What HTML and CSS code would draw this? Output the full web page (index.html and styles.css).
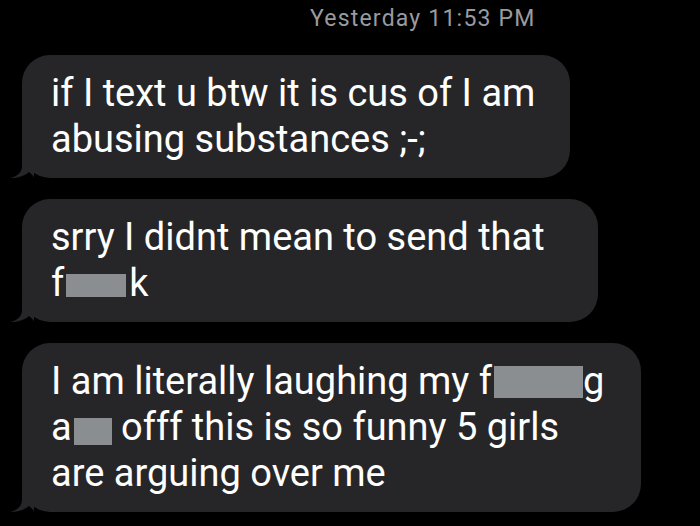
FILE: index.html
```html
<!DOCTYPE html>
<html lang="en">
<head>
  <meta charset="UTF-8" />
  <meta name="viewport" content="width=device-width, initial-scale=1.0"/>
  <title>Messages</title>
  <link rel="stylesheet" href="styles.css">
</head>
<body>
  <div class="thread">
    <div class="stamp">Yesterday 11:53 PM</div>

    <div class="bubble b1">
      if I text u btw it is cus of I am<br>abusing substances ;-;
      <svg class="tail" viewBox="0 0 24 26" width="24" height="26"><path d="M12 0 L12 14 C12 20 8 24 0 26 C8 26 14 24 19 20 C21 22 24 24 24 26 L24 0 Z" fill="#262628"/></svg>
    </div>

    <div class="bubble b2">
      srry I didnt mean to send that<br>f<span class="redact r1"></span>k
      <svg class="tail" viewBox="0 0 24 26" width="24" height="26"><path d="M12 0 L12 14 C12 20 8 24 0 26 C8 26 14 24 19 20 C21 22 24 24 24 26 L24 0 Z" fill="#262628"/></svg>
    </div>

    <div class="bubble b3">
      I am literally laughing my f<span class="redact r3"></span>g<br>a<span class="redact r2"></span> offf this is so funny 5 girls<br>are arguing over me
      <svg class="tail" viewBox="0 0 24 26" width="24" height="26"><path d="M12 0 L12 14 C12 20 8 24 0 26 C8 26 14 24 19 20 C21 22 24 24 24 26 L24 0 Z" fill="#262628"/></svg>
    </div>
  </div>
</body>
</html>
```

FILE: styles.css
```css
body {
  margin: 0;
  background-color: #000;
  font-family: Roboto, "Liberation Sans", sans-serif;
}

.thread {
  display: flex;
  flex-direction: column;
  align-items: flex-start;
  gap: 21px;
  padding: 4px 0 0 22px;
}

.stamp {
  align-self: stretch;
  padding-left: 288px;
  font-size: 23px;
  line-height: 29px;
  letter-spacing: 1.2px;
  color: #9a9a9e;
  margin-bottom: 1px;
}

.bubble {
  position: relative;
  box-sizing: border-box;
  background-color: #262628;
  color: #fff;
  border-radius: 28px;
  padding: 15px 20px 16px 29px;
  font-size: 38px;
  line-height: 46px;
  white-space: nowrap;
}

.b1 { width: 548px; }
.b2 { width: 576px; }
.b3 { width: 619px; }

.tail {
  position: absolute;
  left: -12px;
  bottom: 0;
}

.redact {
  display: inline-block;
  background-color: #8b8e91;
}

.r1 {
  width: 60px;
  height: 23px;
  margin: 0 3px 0 2px;
  vertical-align: -1px;
}

.r2 {
  width: 38px;
  height: 27px;
  margin-left: 2px;
  vertical-align: -5px;
}

.r3 {
  width: 89px;
  height: 32px;
  margin: 0 0 0 2px;
  vertical-align: -4px;
}
```
